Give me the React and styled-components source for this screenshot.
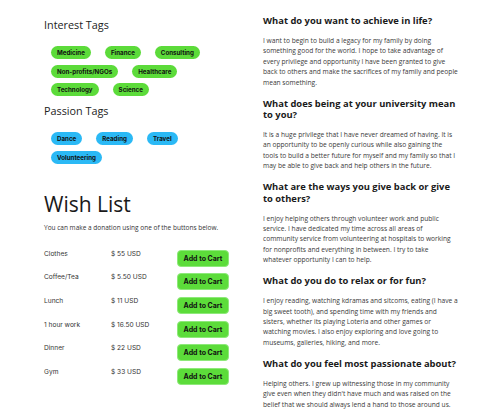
import React from "react";
import styled, { createGlobalStyle } from "styled-components";

const GlobalStyle = createGlobalStyle`
    body {
        margin: 0;
        background: #ffffff;
        font-family: "Open Sans", "Liberation Sans", sans-serif;
        color: #1d1d1d;
    }
`;

const Page = styled.div`
    display: flex;
    gap: 34px;
    padding: 15px 0 40px 44px;
`;

const LeftColumn = styled.div`
    width: 185px;
    display: flex;
    flex-direction: column;
`;

const RightColumn = styled.div`
    width: 195px;
    display: flex;
    flex-direction: column;
`;

const SectionTitle = styled.h3`
    margin: ${(props) => props.top || 0}px 0 0;
    font-size: 10.8px;
    line-height: 14px;
    font-weight: 500;
    color: #222;
`;

const TagList = styled.div`
    display: flex;
    flex-wrap: wrap;
    gap: 5.5px 14px;
    padding-left: 7px;
    margin-top: 14px;
`;

const Tag = styled.span`
    display: inline-flex;
    align-items: center;
    height: 13px;
    padding: 0 6px;
    border-radius: 7px;
    background: ${(props) => (props.kind === "passion" ? "#2bb9f5" : "#5cdb3a")};
    font-family: "Inter", "Liberation Sans", sans-serif;
    font-size: 6.2px;
    font-weight: 700;
    color: #111;
`;

const WishTitle = styled.h1`
    margin: 27px 0 0;
    font-size: 21px;
    line-height: 26px;
    font-weight: 400;
    color: #1a1a1a;
`;

const WishNote = styled.p`
    margin: 6px 0 0;
    font-size: 6.5px;
    line-height: 10px;
    white-space: nowrap;
    color: #333;
`;

const WishTable = styled.div`
    display: grid;
    grid-template-columns: 67px 66px 52px;
    row-gap: 6.7px;
    margin-top: 17px;
`;

const Cell = styled.span`
    font-family: "Inter", "Liberation Sans", sans-serif;
    font-size: 6.6px;
    line-height: 9px;
    color: #333;
`;

const CartButton = styled.button`
    height: 17px;
    padding: 0;
    border: 1px solid #8ee97a;
    border-radius: 4px;
    background: #5cdc3a;
    font-family: "Inter", "Liberation Sans", sans-serif;
    font-size: 7px;
    font-weight: 700;
    color: #111;
`;

const Question = styled.h2`
    margin: ${(props) => (props.first ? 0 : 9.5)}px 0 9.5px;
    font-size: 9.4px;
    line-height: 11.5px;
    font-weight: 700;
    color: #1a1a1a;
`;

const Answer = styled.p`
    margin: 0;
    font-size: 6.65px;
    line-height: 10.4px;
    color: #3a3a3a;
`;

const interestTags = ["Medicine", "Finance", "Consulting", "Non-profits/NGOs", "Healthcare", "Technology", "Science"];
const passionTags = ["Dance", "Reading", "Travel", "Volunteering"];

const wishes = [
    { item: "Clothes", price: "$ 55 USD" },
    { item: "Coffee/Tea", price: "$ 5.50 USD" },
    { item: "Lunch", price: "$ 11 USD" },
    { item: "1 hour work", price: "$ 16.50 USD" },
    { item: "Dinner", price: "$ 22 USD" },
    { item: "Gym", price: "$ 33 USD" },
];

const questions = [
    {
        q: "What do you want to achieve in life?",
        a: "I want to begin to build a legacy for my family by doing something good for the world. I hope to take advantage of every privilege and opportunity I have been granted to give back to others and make the sacrifices of my family and people mean something.",
    },
    {
        q: "What does being at your university mean to you?",
        a: "It is a huge privilege that I have never dreamed of having. It is an opportunity to be openly curious while also gaining the tools to build a better future for myself and my family so that I may be able to give back and help others in the future.",
    },
    {
        q: "What are the ways you give back or give to others?",
        a: "I enjoy helping others through volunteer work and public service. I have dedicated my time across all areas of community service from volunteering at hospitals to working for nonprofits and everything in between. I try to take whatever opportunity I can to help.",
    },
    {
        q: "What do you do to relax or for fun?",
        a: "I enjoy reading, watching kdramas and sitcoms, eating (I have a big sweet tooth), and spending time with my friends and sisters, whether its playing Loteria and other games or watching movies. I also enjoy exploring and love going to museums, galleries, hiking, and more.",
    },
    {
        q: "What do you feel most passionate about?",
        a: "Helping others. I grew up witnessing those in my community give even when they didn't have much and was raised on the belief that we should always lend a hand to those around us.",
    },
];

export default function App() {
    return (
        <>
            <GlobalStyle />
            <Page>
                <LeftColumn>
                    <SectionTitle top={3}>Interest Tags</SectionTitle>
                    <TagList>
                        {interestTags.map((tag) => (
                            <Tag key={tag}>{tag}</Tag>
                        ))}
                    </TagList>
                    <SectionTitle top={8}>Passion Tags</SectionTitle>
                    <TagList>
                        {passionTags.map((tag) => (
                            <Tag key={tag} kind="passion">
                                {tag}
                            </Tag>
                        ))}
                    </TagList>

                    <WishTitle>Wish List</WishTitle>
                    <WishNote>You can make a donation using one of the buttons below.</WishNote>
                    <WishTable>
                        {wishes.map((wish) => (
                            <React.Fragment key={wish.item}>
                                <Cell>{wish.item}</Cell>
                                <Cell>{wish.price}</Cell>
                                <CartButton>Add to Cart</CartButton>
                            </React.Fragment>
                        ))}
                    </WishTable>
                </LeftColumn>

                <RightColumn>
                    {questions.map((entry, i) => (
                        <React.Fragment key={entry.q}>
                            <Question first={i === 0}>{entry.q}</Question>
                            <Answer>{entry.a}</Answer>
                        </React.Fragment>
                    ))}
                </RightColumn>
            </Page>
        </>
    );
}
